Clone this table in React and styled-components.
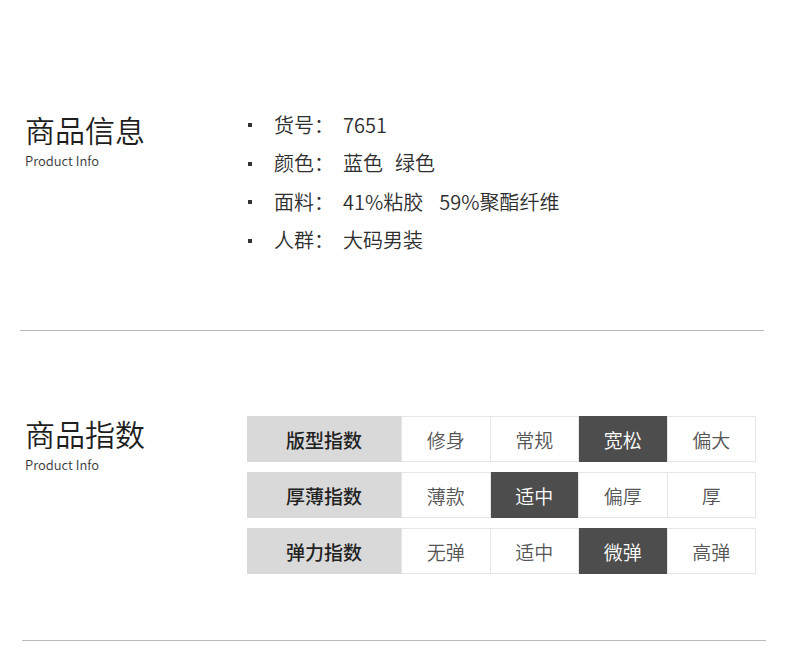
import React from "react";
import styled, { createGlobalStyle } from "styled-components";

const Global = createGlobalStyle`
  html, body { margin: 0; padding: 0; background: #fff; }
  body { font-family: "Noto Sans CJK SC", "Noto Sans", sans-serif; color: #333; }
`;

const Page = styled.div`
  width: 790px;
  height: 653px;
  overflow: hidden;
  background: #fff;
`;

const Section = styled.section`
  display: flex;
  padding: ${(p) => p.$top}px 0 0 25px;
  height: ${(p) => p.$height}px;
  box-sizing: border-box;
`;

const TitleCol = styled.div`
  width: 222px;
  flex: none;
  padding-top: ${(p) => p.$offset}px;
`;

const Title = styled.h2`
  margin: 0;
  font-size: 30px;
  line-height: 32px;
  font-weight: 350;
  color: #1e1e1e;
  letter-spacing: 0;
`;

const Sub = styled.div`
  margin-top: 8px;
  font-size: 13px;
  line-height: 16px;
  color: #3a3a3a;
  font-weight: 350;
`;

const List = styled.ul`
  list-style: none;
  margin: 0;
  padding: 0;
`;

const Item = styled.li`
  display: flex;
  align-items: center;
  height: 38.5px;
  font-size: 20px;
  color: #2e2e2e;
  font-weight: 350;
`;

const Bullet = styled.span`
  width: 4px;
  height: 4px;
  background: #333;
  margin: 2px 22px 0 1px;
  flex: none;
`;

const Label = styled.span`
  width: 69px;
  flex: none;
`;

const Value = styled.span`
  margin-right: ${(p) => p.$gap || 0}px;
`;

const Divider = styled.hr`
  margin: 0 0 0 ${(p) => p.$left}px;
  width: 744px;
  border: none;
  height: 1px;
  background: #b8b8b8;
`;

const Table = styled.div`
  display: flex;
  flex-direction: column;
  gap: 10px;
`;

const Row = styled.div`
  display: grid;
  grid-template-columns: 153px repeat(4, 1fr);
  width: 509px;
  height: 46px;
  box-sizing: border-box;
  border: 1px solid #e6e6e6;
`;

const HeadCell = styled.div`
  background: #d9d9d9;
  display: flex;
  align-items: center;
  justify-content: center;
  font-size: 19px;
  font-weight: 500;
  color: #222;
  margin: -1px 0 -1px -1px;
`;

const Cell = styled.div`
  display: flex;
  align-items: center;
  justify-content: center;
  font-size: 19px;
  font-weight: 350;
  border-left: 1px solid #e6e6e6;
  background: ${(p) => (p.$active ? "#4d4d4d" : "#fff")};
  color: ${(p) => (p.$active ? "#fff" : "#555")};
  margin: ${(p) => (p.$active ? "-1px 0" : "0")};
`;

const info = [
  ["货号：", ["7651"], 0],
  ["颜色：", ["蓝色", "绿色"], 12],
  ["面料：", ["41%粘胶", "59%聚酯纤维"], 16],
  ["人群：", ["大码男装"], 0],
];

const indices = [
  ["版型指数", ["修身", "常规", "宽松", "偏大"], 2],
  ["厚薄指数", ["薄款", "适中", "偏厚", "厚"], 1],
  ["弹力指数", ["无弹", "适中", "微弹", "高弹"], 2],
];

export default function App() {
  return (
    <Page>
      <Global />
      <Section $top={105} $height={330}>
        <TitleCol $offset={8}>
          <Title>商品信息</Title>
          <Sub>Product Info</Sub>
        </TitleCol>
        <List>
          {info.map(([k, vals, gap]) => (
            <Item key={k}>
              <Bullet />
              <Label>{k}</Label>
              {vals.map((v, i) => (
                <Value key={v} $gap={i < vals.length - 1 ? gap : 0}>
                  {v}
                </Value>
              ))}
            </Item>
          ))}
        </List>
      </Section>
      <Divider $left={20} />
      <Section $top={85} $height={309}>
        <TitleCol $offset={1}>
          <Title>商品指数</Title>
          <Sub>Product Info</Sub>
        </TitleCol>
        <Table>
          {indices.map(([h, cells, act]) => (
            <Row key={h}>
              <HeadCell>{h}</HeadCell>
              {cells.map((c, i) => (
                <Cell key={c + i} $active={i === act}>
                  {c}
                </Cell>
              ))}
            </Row>
          ))}
        </Table>
      </Section>
      <Divider $left={22} />
    </Page>
  );
}
